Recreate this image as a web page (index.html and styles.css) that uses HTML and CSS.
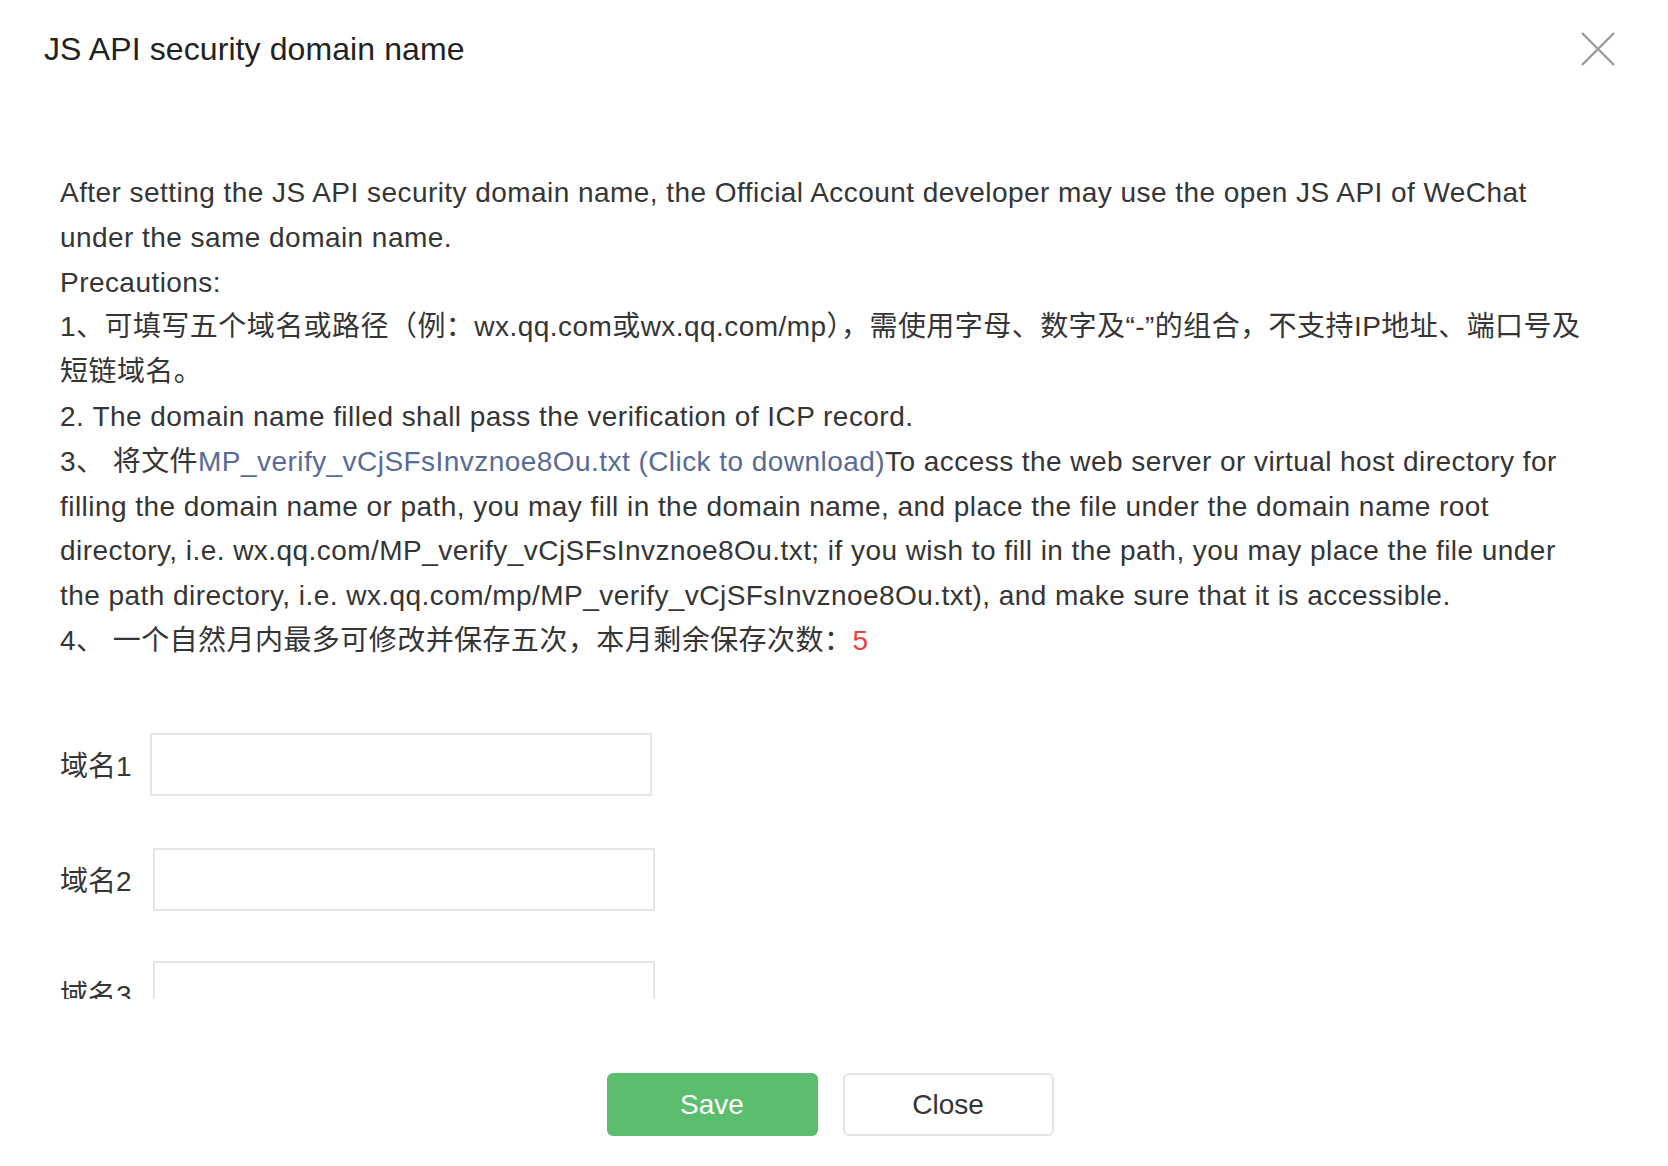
FILE: index.html
```html
<!DOCTYPE html>
<html lang="en">
<head>
<meta charset="utf-8">
<title>JS API security domain name</title>
<link rel="stylesheet" href="styles.css">
</head>
<body>
<div class="dialog">
  <div class="dialog-hd">
    <h3 class="dialog-title">JS API security domain name</h3>
    <button class="dialog-close" type="button" aria-label="Close">
      <svg width="34" height="34" viewBox="0 0 34 34"><path d="M1 1L33 33M33 1L1 33" stroke="#9b9b9b" stroke-width="2.4" fill="none"/></svg>
    </button>
  </div>
  <div class="dialog-bd">
    <div class="tips">
      After setting the JS API security domain name, the Official Account developer may use the open JS API of WeChat<br>
      under the same domain name.<br>
      Precautions:<br>
      1、可填写五个域名或路径（例：wx.qq.com或wx.qq.com/mp），需使用字母、数字及“-”的组合，不支持IP地址、端口号及<br>
      短链域名。<br>
      2. The domain name filled shall pass the verification of ICP record.<br>
      3、 将文件<a class="link" href="#">MP_verify_vCjSFsInvznoe8Ou.txt (Click to download)</a>To access the web server or virtual host directory for<br>
      filling the domain name or path, you may fill in the domain name, and place the file under the domain name root<br>
      directory, i.e. wx.qq.com/MP_verify_vCjSFsInvznoe8Ou.txt; if you wish to fill in the path, you may place the file under<br>
      the path directory, i.e. wx.qq.com/mp/MP_verify_vCjSFsInvznoe8Ou.txt), and make sure that it is accessible.<br>
      4、 一个自然月内最多可修改并保存五次，本月剩余保存次数：<span class="count">5</span>
    </div>
    <div class="form">
      <div class="form-row"><label class="form-label">域名1</label><input class="form-input" type="text"></div>
      <div class="form-row"><label class="form-label">域名2</label><input class="form-input" type="text"></div>
      <div class="form-row"><label class="form-label">域名3</label><input class="form-input" type="text"></div>
    </div>
  </div>
  <div class="dialog-ft">
    <button class="btn btn-primary" type="button">Save</button>
    <button class="btn btn-default" type="button">Close</button>
  </div>
</div>
</body>
</html>
```
FILE: styles.css
```css
html, body {
  margin: 0;
  padding: 0;
  background: #fff;
}
body {
  font-family: "Liberation Sans", "Noto Sans CJK SC", sans-serif;
  color: #353535;
}
.dialog {
  width: 1668px;
  height: 1166px;
  display: flex;
  flex-direction: column;
  background: #fff;
}
.dialog-hd {
  height: 98px;
  flex: none;
  display: flex;
  align-items: center;
  justify-content: space-between;
  padding: 0 53px 0 44px;
}
.dialog-title {
  margin: 0;
  font-size: 32px;
  font-weight: normal;
  letter-spacing: 0.1px;
  color: #222;
}
.dialog-close {
  width: 34px;
  height: 34px;
  padding: 0;
  border: 0;
  background: none;
  display: flex;
  cursor: pointer;
}
.dialog-bd {
  height: 901px;
  flex: none;
  overflow: hidden;
  padding: 73px 40px 0 60px;
  box-sizing: border-box;
}
.tips {
  font-size: 28px;
  line-height: 44.8px;
  letter-spacing: 0.45px;
  white-space: nowrap;
}
.link {
  color: #576b95;
  text-decoration: none;
}
.count {
  color: #e64340;
}
.form {
  padding-top: 69px;
  display: flex;
  flex-direction: column;
  gap: 52px;
}
.form-row {
  display: flex;
  align-items: center;
}
.form-label {
  font-size: 28px;
  color: #353535;
  margin-right: 18px;
}
.form-row:nth-child(n+2) .form-label {
  margin-right: 21px;
}
.form-input {
  width: 502px;
  height: 63px;
  box-sizing: border-box;
  border: 2px solid #e6e6e8;
  border-radius: 0;
  outline: none;
  padding: 0 16px;
  font-size: 28px;
  margin: 0;
}
.form-row:last-child .form-input {
  margin-top: -2px;
}
.dialog-ft {
  flex: none;
  display: flex;
  justify-content: center;
  gap: 25px;
  padding: 74px 8px 0 0;
}
.btn {
  width: 211px;
  height: 63px;
  box-sizing: border-box;
  border-radius: 6px;
  font-size: 28px;
  font-family: "Liberation Sans", "Noto Sans CJK SC", sans-serif;
  cursor: pointer;
  padding: 0;
}
.btn-primary {
  background: #5bbd6e;
  border: 2px solid #5bbd6e;
  color: #fff;
}
.btn-default {
  background: #fff;
  border: 2px solid #e4e4e8;
  color: #353535;
}
```
